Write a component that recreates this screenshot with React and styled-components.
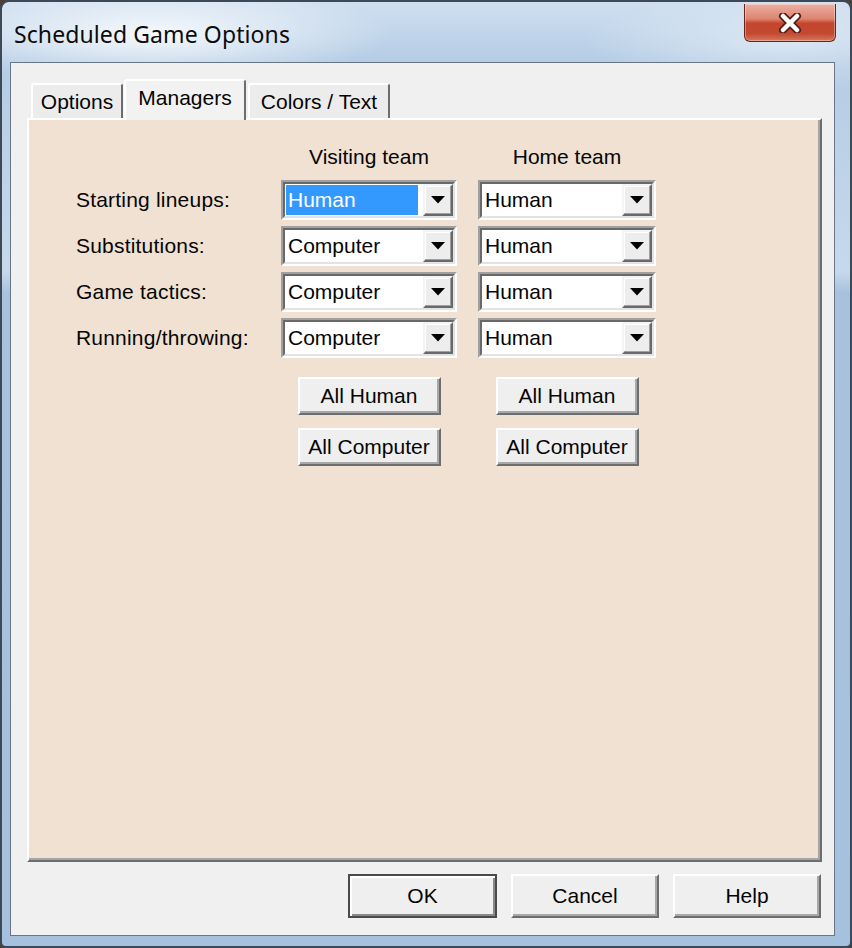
import React from 'react'
import styled, { createGlobalStyle } from 'styled-components'

const GlobalStyle = createGlobalStyle`
  html, body {
    margin: 0;
    padding: 0;
  }
  body {
    background: #4a4137;
    font-family: "Liberation Sans", Arial, sans-serif;
    color: #050505;
  }
`

const Window = styled.div`
  box-sizing: border-box;
  width: 852px;
  height: 948px;
  display: flex;
  flex-direction: column;
  border: 2px solid #3d4957;
  border-radius: 9px 9px 6px 6px;
  padding: 0 15px 10px 8px;
  background:
    radial-gradient(ellipse 240px 50px at 150px 32px, rgba(255,255,255,.85), rgba(255,255,255,0) 100%),
    radial-gradient(ellipse 200px 50px at 780px 40px, rgba(255,255,255,.45), rgba(255,255,255,0) 100%),
    linear-gradient(180deg, #cfdff0 0, #b4cce5 60px, #c6d9ec 270px, #a8c2de 290px, #a6c1dd 100%);
`

const TitleBar = styled.div`
  height: 60px;
  display: flex;
  justify-content: space-between;
  align-items: flex-start;
`

const Title = styled.div`
  margin: 17px 0 0 4px;
  font-family: "Noto Sans", "Open Sans", sans-serif;
  font-size: 23px;
  line-height: 30px;
  color: #0c0c0c;
  letter-spacing: 0.1px;
`

const CloseButton = styled.div`
  box-sizing: border-box;
  width: 92px;
  height: 38px;
  margin: 2px -1px 0 0;
  display: flex;
  align-items: center;
  justify-content: center;
  border: 1px solid #6b2419;
  border-top: none;
  border-radius: 0 0 6px 6px;
  background: linear-gradient(180deg, #eab1a3 0, #dd8570 40%, #c5452d 52%, #c24a31 80%, #d8785d 100%);
  box-shadow: inset 0 0 0 1px rgba(255, 255, 255, .35);
`

const Client = styled.div`
  flex: 1;
  display: flex;
  flex-direction: column;
  border: 1px solid #6a7684;
  background: #f0f0f0;
  padding: 16px 12px 0 16px;
`

const TabRow = styled.div`
  height: 39px;
  display: flex;
  align-items: flex-end;
  padding-left: 4px;
`

const Tab = styled.div`
  position: relative;
  box-sizing: border-box;
  width: ${p => p.$width}px;
  height: ${p => (p.$active ? 41 : 35)}px;
  margin-left: ${p => p.$gap}px;
  margin-bottom: ${p => (p.$active ? -2 : 0)}px;
  z-index: ${p => (p.$active ? 1 : 0)};
  display: flex;
  align-items: flex-start;
  justify-content: center;
  padding-top: ${p => (p.$active ? 4 : 4)}px;
  border-style: solid;
  border-width: 2px 2px 0 2px;
  border-color: #fff #6d6d6d #fff #fff;
  border-radius: 3px 3px 0 0;
  background: ${p => (p.$active ? '#f2f2f2' : '#ececec')};
  font-size: 21px;
  line-height: 26px;
  color: #050505;
`

const Panel = styled.div`
  box-sizing: border-box;
  height: 744px;
  border-style: solid;
  border-width: 2px;
  border-color: #fff #6d6d6d #6d6d6d #fff;
  box-shadow: inset -2px -2px 0 #a5a5a5;
  background: #f0e1d3;
  padding: 24px 0 0 47px;
`

const Grid = styled.div`
  display: grid;
  grid-template-columns: 184px 176px 178px;
  column-gap: 21px;
  row-gap: ${p => p.$rowGap}px;
  margin-top: ${p => p.$top}px;
`

const Heading = styled.div`
  text-align: center;
  font-size: 21px;
  line-height: 26px;
`

const Label = styled.div`
  display: flex;
  align-items: center;
  font-size: 21px;
  letter-spacing: 0.2px;
`

const ComboFrame = styled.div`
  box-sizing: border-box;
  height: 40px;
  display: flex;
  border: 2px solid;
  border-color: #a0a0a0 #fff #fff #a0a0a0;
`

const ComboInner = styled.div`
  flex: 1;
  display: flex;
  border: 2px solid;
  border-color: #696969 #e3e3e3 #e3e3e3 #696969;
  background: #fff;
`

const Field = styled.div`
  flex: 1;
  display: flex;
  padding: 1px 5px 1px 1px;
`

const Value = styled.div`
  flex: 1;
  display: flex;
  align-items: center;
  padding-left: 2px;
  font-size: 21px;
  background: ${p => (p.$selected ? '#3399ff' : 'transparent')};
  color: ${p => (p.$selected ? '#fff' : '#050505')};
`

const DropButton = styled.div`
  box-sizing: border-box;
  width: 30px;
  display: flex;
  align-items: center;
  justify-content: center;
  border: 2px solid;
  border-color: #f4f4f4 #696969 #696969 #f4f4f4;
  box-shadow: inset -1px -1px 0 #a0a0a0, inset 1px 1px 0 #fff;
  background: #ededed;
`

const Button = styled.div`
  box-sizing: border-box;
  width: ${p => p.$width}px;
  height: ${p => p.$height}px;
  justify-self: center;
  display: flex;
  align-items: center;
  justify-content: center;
  border: 2px solid;
  border-color: ${p => (p.$default ? '#4a4a4a' : '#fff #6d6d6d #6d6d6d #fff')};
  box-shadow: ${p => (p.$default
    ? 'inset 2px 2px 0 #fff, inset -2px -2px 0 #8a8a8a'
    : 'inset -2px -2px 0 #a8a8a8')};
  background: #efefef;
  font-size: 21px;
`

const Footer = styled.div`
  display: flex;
  justify-content: flex-end;
  gap: 14px;
  margin-top: 12px;
  padding-right: 1px;
`

const rows = [
  { label: 'Starting lineups:', visiting: 'Human', home: 'Human', selected: true },
  { label: 'Substitutions:', visiting: 'Computer', home: 'Human' },
  { label: 'Game tactics:', visiting: 'Computer', home: 'Human' },
  { label: 'Running/throwing:', visiting: 'Computer', home: 'Human' },
]

function Arrow() {
  return (
    <svg width="14" height="8" viewBox="0 0 14 8">
      <polygon points="0,0 14,0 7,7.5" fill="#000" />
    </svg>
  )
}

function CloseGlyph() {
  return (
    <svg width="28" height="20" viewBox="0 0 28 20">
      <path d="M7 3 L21 17 M21 3 L7 17" stroke="#5a1d14" strokeWidth="8" strokeLinecap="round" />
      <path d="M7 3 L21 17 M21 3 L7 17" stroke="#fff" strokeWidth="4.5" strokeLinecap="round" />
    </svg>
  )
}

function Combo({ value, selected }) {
  return (
    <ComboFrame>
      <ComboInner>
        <Field>
          <Value $selected={selected}>{value}</Value>
        </Field>
        <DropButton><Arrow /></DropButton>
      </ComboInner>
    </ComboFrame>
  )
}

export default function App() {
  return (
    <>
      <GlobalStyle />
      <Window>
        <TitleBar>
          <Title>Scheduled Game Options</Title>
          <CloseButton><CloseGlyph /></CloseButton>
        </TitleBar>
        <Client>
          <TabRow>
            <Tab $width={92} $gap={0}>Options</Tab>
            <Tab $width={122} $gap={1} $active>Managers</Tab>
            <Tab $width={142} $gap={2}>Colors / Text</Tab>
          </TabRow>
          <Panel>
            <Grid $rowGap={0} $top={0}>
              <div />
              <Heading>Visiting team</Heading>
              <Heading>Home team</Heading>
            </Grid>
            <Grid $rowGap={6} $top={10}>
              {rows.map(row => (
                <React.Fragment key={row.label}>
                  <Label>{row.label}</Label>
                  <Combo value={row.visiting} selected={row.selected} />
                  <Combo value={row.home} />
                </React.Fragment>
              ))}
            </Grid>
            <Grid $rowGap={13} $top={19}>
              <div />
              <Button $width={143} $height={38}>All Human</Button>
              <Button $width={143} $height={38}>All Human</Button>
              <div />
              <Button $width={143} $height={38}>All Computer</Button>
              <Button $width={143} $height={38}>All Computer</Button>
            </Grid>
          </Panel>
          <Footer>
            <Button $width={149} $height={44} $default>OK</Button>
            <Button $width={148} $height={44}>Cancel</Button>
            <Button $width={148} $height={44}>Help</Button>
          </Footer>
        </Client>
      </Window>
    </>
  )
}
